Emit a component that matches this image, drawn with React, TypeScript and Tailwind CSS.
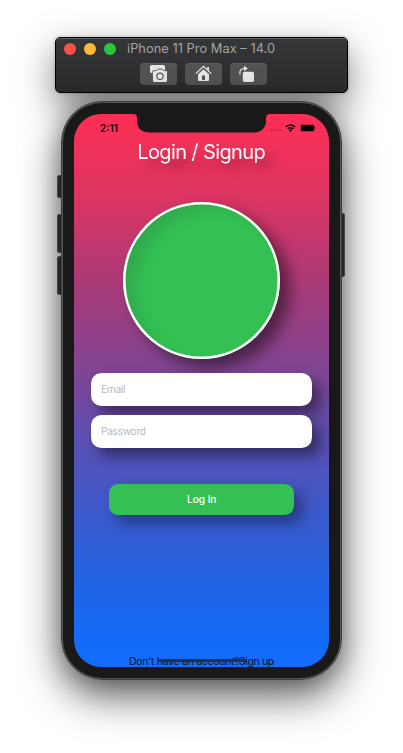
import React from 'react';

function ToolButton({ label, children }: { label: string; children: React.ReactNode }) {
  return (
    <button aria-label={label} className="flex h-[22px] w-[37px] items-center justify-center rounded-[4px] bg-[#525355] shadow-[inset_0_1px_0_#5b5c5d]">
      {children}
    </button>
  );
}

function SimulatorBar() {
  return (
    <header className="h-[56px] w-[293px] rounded-[5px] border border-black bg-linear-to-b from-[#343638] to-[#292b2c] shadow-[0_14px_36px_rgba(0,0,0,0.5),0_0_3px_rgba(0,0,0,0.25)]">
      <div className="flex h-[23px] items-center rounded-t-[4px] border-t border-[#606163] pb-[2px] pl-[8px]">
        <div className="flex gap-[8px]">
          <i className="size-[12px] rounded-full bg-[#ff4f4b]" />
          <i className="size-[12px] rounded-full bg-[#feb835]" />
          <i className="size-[12px] rounded-full bg-[#2ac53f]" />
        </div>
        <svg className="ml-[11px] h-[18px] w-[150px] overflow-visible" aria-label="Window title">
          <text x="0" y="13" textLength="148" fontSize="12.8" fill="#a3a4a5">iPhone 11 Pro Max – 14.0</text>
        </svg>
      </div>
      <div className="flex gap-[8px] pl-[84px] pt-[2px]">
        <ToolButton label="Screenshot">
          <svg width="17" height="18" viewBox="0 0 17 18">
            <path d="M1.500 0h12Q15 0 15 1.500V6L8 12H2V8H1L0 7V1.500Q0 0 1.500 0Z" fill="#e4e5e7" />
            <path d="M3.700 5.500h2.500L8 3.700h4.200L14 5.500h1.500q1.500 0 1.500 1.500v8.500q0 1.500-1.500 1.500h-11Q3 17 3 15.500V7" fill="#e4e5e7" />
            <path d="M2.500 13V7.500Q2.500 5.600 4 5.600h2.300l1.500-1.500h4.500l1.600 1.500H16" fill="none" stroke="#525355" strokeWidth=".9" />
            <circle cx="10" cy="11.300" r="3.200" fill="#e4e5e7" stroke="#505153" strokeWidth="1.100" />
          </svg>
        </ToolButton>
        <ToolButton label="Home">
          <svg width="17" height="18" viewBox="0 0 17 18">
            <path d="m.8 8.600 7.700-7.200 7.700 7.200" fill="none" stroke="#e4e5e7" strokeWidth="1.300" />
            <path d="M12.200 2H14v4l-1.800-1.700ZM8.500 4.200l5.500 5V15q0 1-1 1H4q-1 0-1-1V9.200Z" fill="#e4e5e7" />
            <path d="M7 10.500h3V15H7Z" fill="#505153" />
          </svg>
        </ToolButton>
        <ToolButton label="Rotate">
          <svg width="17" height="18" viewBox="0 0 17 18" className="-ml-[2px]">
            <rect x="3.800" y="6.800" width="11.200" height="10.200" rx="1.700" fill="#e4e5e7" />
            <path d="M.9 9.500V7.500Q.9 3.500 5.500 3.500" fill="none" stroke="#e4e5e7" strokeWidth="1.200" />
            <path d="M5 .7 8.900 3.500 5 6.300Z" fill="#e4e5e7" />
          </svg>
        </ToolButton>
      </div>
    </header>
  );
}

function StatusBar() {
  return (
    <div className="flex h-[28px] items-start">
      <svg className="ml-[26px] mt-[8px] h-[13px] w-[20px] shrink-0 overflow-visible" aria-label="Clock">
        <text x="0" y="9.500" textLength="18" fontSize="10" fontWeight="600" fill="#16040a">2:11</text>
      </svg>
      <svg className="ml-[13px] h-[19px] w-[137px] shrink-0" viewBox="0 0 137 19">
        <path d="M0 0h137q-4 0-4 4v2q0 12.500-13 12.500H17Q4 18.500 4 6V4Q4 0 0 0Z" fill="#191919" />
      </svg>
      <div className="mt-[9px] flex h-[10px] items-center">
        <svg width="12" height="10" viewBox="0 0 12 10">
          <path d="M.3 7h2M3.300 7h2M6.300 7h2M9.300 7h2" stroke="#a51f3c" strokeWidth="1.100" />
        </svg>
        <svg className="ml-[3px]" width="11" height="8" viewBox="0 0 11 8">
          <path d="M.8 3Q5.500-1 10.200 3M2.700 5Q5.500 2.500 8.300 5" fill="none" stroke="#16040a" strokeWidth="1.600" />
          <path d="M3.800 6.100q1.700-1.300 3.400 0L5.500 7.800Z" fill="#16040a" />
        </svg>
        <svg className="ml-[4px]" width="17" height="8" viewBox="0 0 17 8">
          <rect x=".4" y=".4" width="14.200" height="7.200" rx="2" fill="none" stroke="#16040a" strokeOpacity=".4" strokeWidth=".7" />
          <rect x="1.100" y="1.100" width="12.800" height="5.800" rx="1.200" fill="#090205" />
          <path d="M15.400 2.700v2.600q1-.3 1-1.300t-1-1.300Z" fill="#16040a" fillOpacity=".5" />
        </svg>
      </div>
    </div>
  );
}

function Field({ label, width }: { label: string; width: number }) {
  return (
    <div className="flex h-[33px] w-[221px] items-center rounded-[10.5px] bg-white pl-[10px] shadow-[8px_8px_14px_rgba(0,0,0,0.44)]">
      <svg className="h-[17px] w-[80px] overflow-visible" aria-label={label}>
        <text x="0" y="12" textLength={width} fontSize="10.200" fill="#b8b8ba">{label}</text>
      </svg>
    </div>
  );
}

function Phone() {
  return (
    <section className="relative mt-[8px] h-[579px] w-[281px] rounded-[41px] shadow-[0_16px_40px_rgba(0,0,0,0.64),0_0_20px_rgba(0,0,0,0.22)]">
      <i className="absolute -left-[4px] top-[74px] h-[23px] w-[6px] rounded-l-[2px] border border-[#484848] bg-[#252525]" />
      <i className="absolute -left-[4px] top-[113px] h-[39px] w-[6px] rounded-l-[2px] border border-[#484848] bg-[#252525]" />
      <i className="absolute -left-[4px] top-[155px] h-[39px] w-[6px] rounded-l-[2px] border border-[#484848] bg-[#252525]" />
      <i className="absolute -right-[3px] top-[112px] h-[64px] w-[6px] rounded-r-[2px] border border-[#484848] bg-[#252525]" />
      <div className="relative h-full w-full rounded-[41px] border border-[#3d3d3d] bg-[#565656] p-px">
        <div className="h-full w-full rounded-[39px] bg-[#191919] px-[11px] pt-[11px]">
          <main className="flex h-[553px] w-[255px] flex-col overflow-hidden rounded-[27px] bg-[linear-gradient(180deg,#ff2e54_0%,#d93563_16%,#ac3a77_30%,#7b4696_48%,#5550b7_61%,#355bd0_75%,#1f64e5_86%,#136cfc_97%)]">
            <StatusBar />
            <svg className="ml-[64px] h-[30px] w-[128px] shrink-0 overflow-visible drop-shadow-[9px_8px_5px_rgba(0,0,0,0.3)]" aria-label="Login / Signup">
              <text x="-0.800" y="16.500" textLength="128.500" fontSize="20" fill="white">Login / Signup</text>
            </svg>
            <div className="ml-[49px] mt-[30px] size-[157px] shrink-0 rounded-full bg-[#34c053] shadow-[10px_9px_15px_rgba(0,0,0,0.48),inset_14px_9px_14px_-3px_rgba(40,100,60,0.25)]">
              <svg className="size-full" viewBox="0 0 157 157">
                <circle cx="78.500" cy="78.500" r="77.200" fill="none" stroke="white" strokeWidth="2.600" />
              </svg>
            </div>
            <div className="ml-[17px] mt-[14px] flex flex-col gap-[9px]">
              <Field label="Email" width={24.5} />
              <Field label="Password" width={45} />
            </div>
            <button className="ml-[35px] mt-[36px] flex h-[31px] w-[185px] shrink-0 items-center justify-center rounded-[9px] bg-[#34c053] shadow-[8px_8px_14px_rgba(0,0,0,0.36)]">
              <svg className="h-[17px] w-[30px] overflow-visible" aria-label="Log In">
                <text x="0" y="12" textLength="29.500" fontSize="10.200" fontWeight="500" fill="white">Log In</text>
              </svg>
            </button>
            <div className="relative ml-[55px] mt-auto h-[13px] w-[146px] shrink-0">
              <svg className="block h-[13px] w-[146px] overflow-visible" aria-label="Account prompt">
                <text x="0" y="10.800" textLength="110.500" fontSize="10.500" fill="#04142d">Don't have an account?</text>
                <text x="109.800" y="10.800" textLength="35.500" fontSize="10.500" fill="#04142d">Sign up</text>
              </svg>
              <i className="absolute left-[28px] top-[5px] h-[3px] w-[90px] rounded-full bg-[#28303d]" />
            </div>
          </main>
        </div>
      </div>
    </section>
  );
}

export default function App() {
  return (
    <div className="flex h-[753px] w-[403px] flex-col items-center overflow-hidden bg-white pt-[37px] font-['Inter',sans-serif]">
      <SimulatorBar />
      <Phone />
    </div>
  );
}
